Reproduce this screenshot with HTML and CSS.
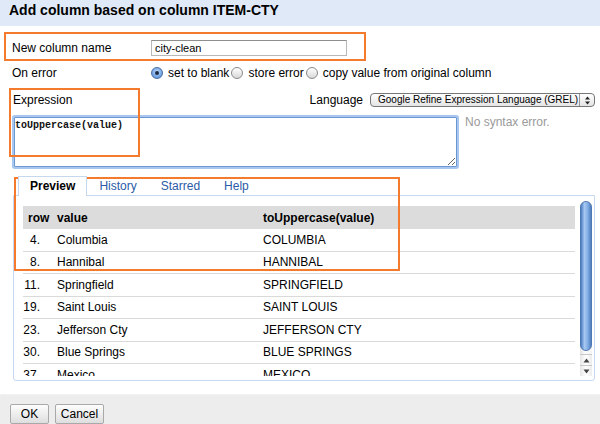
FILE: index.html
```html
<!DOCTYPE html>
<html>
<head>
<meta charset="utf-8">
<title>Add column</title>
<link rel="stylesheet" href="styles.css">
</head>
<body>
<div class="dialog">
  <div class="titlebar">Add column based on column ITEM-CTY</div>
  <div class="content">
    <div class="row row-name">
      <span class="lbl">New column name</span>
      <input class="name-input" type="text" value="city-clean">
    </div>
    <div class="row row-error">
      <span class="lbl">On error</span>
      <span class="radio checked"></span><span class="opt">set to blank</span>
      <span class="radio"></span><span class="opt">store error</span>
      <span class="radio"></span><span class="opt">copy value from original column</span>
    </div>
    <div class="row row-expr">
      <span class="lbl expr-lbl">Expression</span>
      <span class="lang-lbl">Language</span>
      <span class="select"><span class="select-text">Google Refine Expression Language (GREL)</span><span class="select-arrows"><svg width="7" height="9" viewBox="0 0 7 9"><path d="M3.5 0.5 L6 3.5 L1 3.5 Z M1 5.5 L6 5.5 L3.5 8.5 Z" fill="#222"/></svg></span></span>
    </div>
    <div class="row row-ta">
      <textarea class="expr" spellcheck="false">toUppercase(value)</textarea>
      <span class="status">No syntax error.</span>
    </div>
    <div class="tabs">
      <span class="tab active">Preview</span>
      <span class="tab">History</span>
      <span class="tab">Starred</span>
      <span class="tab">Help</span>
    </div>
    <div class="panel">
      <div class="grid-wrap">
        <div class="prow head"><span class="c1">row</span><span>value</span><span>toUppercase(value)</span></div>
        <div class="prow"><span class="c1 num">4.</span><span>Columbia</span><span>COLUMBIA</span></div>
        <div class="prow"><span class="c1 num">8.</span><span>Hannibal</span><span>HANNIBAL</span></div>
        <div class="prow"><span class="c1 num">11.</span><span>Springfield</span><span>SPRINGFIELD</span></div>
        <div class="prow"><span class="c1 num">19.</span><span>Saint Louis</span><span>SAINT LOUIS</span></div>
        <div class="prow"><span class="c1 num">23.</span><span>Jefferson Cty</span><span>JEFFERSON CTY</span></div>
        <div class="prow"><span class="c1 num">30.</span><span>Blue Springs</span><span>BLUE SPRINGS</span></div>
        <div class="prow"><span class="c1 num">37.</span><span>Mexico</span><span>MEXICO</span></div>
        <div class="prow"><span class="c1 num">41.</span><span>Kirksville</span><span>KIRKSVILLE</span></div>
      </div>
      <div class="scrollbar">
        <div class="thumb"></div>
        <div class="track-rest"></div>
        <div class="arrow"><svg width="7" height="5" viewBox="0 0 7 5"><path d="M3.5 0.5 L6.5 4.5 L0.5 4.5 Z" fill="#444"/></svg></div>
        <div class="arrow"><svg width="7" height="5" viewBox="0 0 7 5"><path d="M0.5 0.5 L6.5 0.5 L3.5 4.5 Z" fill="#444"/></svg></div>
      </div>
    </div>
  </div>
  <div class="footer">
    <button class="btn btn-ok">OK</button>
    <button class="btn btn-cancel">Cancel</button>
  </div>
  <div class="hl hl1"></div>
  <div class="hl hl2"></div>
  <div class="hl hl3"></div>
</div>
</body>
</html>
```
FILE: styles.css
```css
html, body {
  margin: 0;
  padding: 0;
  background: #fff;
}
body {
  font-family: "Liberation Sans", Arial, sans-serif;
  font-size: 12px;
  color: #000;
  width: 600px;
  height: 424px;
  overflow: hidden;
}
.dialog {
  position: relative;
  width: 600px;
  height: 424px;
  display: flex;
  flex-direction: column;
}
.titlebar {
  height: 27px;
  box-sizing: border-box;
  background: #dfe9f8;
  padding: 2px 9px 0;
  font-size: 14px;
  font-weight: bold;
  line-height: 17px;
}
.content {
  padding: 0 5px 0 12px;
  display: flex;
  flex-direction: column;
}
.row {
  display: flex;
  align-items: center;
}
.lbl {
  width: 139px;
  flex: none;
}
.row-name {
  margin-top: 14px;
  height: 16px;
}
.name-input {
  width: 196px;
  height: 16px;
  box-sizing: border-box;
  margin: 0;
  border: 1px solid #b8b8b8;
  border-top-color: #8e8e8e;
  padding: 0 0 0 3px;
  font-family: "Liberation Sans", Arial, sans-serif;
  font-size: 11px;
  color: #000;
  background: #fff;
  outline: none;
}
.row-error {
  margin-top: 9px;
  height: 16px;
}
.radio {
  width: 12px;
  height: 12px;
  box-sizing: border-box;
  border-radius: 50%;
  border: 1px solid #8a8a8a;
  background: linear-gradient(#ffffff, #d8d8d8);
  flex: none;
  margin-left: 2px;
  position: relative;
}
.row-error .lbl + .radio {
  margin-left: 0;
}
.radio.checked {
  border-color: #4a6fa5;
  background: radial-gradient(circle at 50% 40%, #c7defa 0, #7aaae6 55%, #4f84cf 100%);
}
.radio.checked::after {
  content: "";
  position: absolute;
  left: 3px;
  top: 3px;
  width: 4px;
  height: 4px;
  border-radius: 50%;
  background: #1d2b44;
}
.opt {
  margin-left: 5px;
}
.row-expr {
  margin-top: 12px;
  height: 14px;
}
.expr-lbl {
  padding-left: 1px;
}
.lang-lbl {
  margin-left: auto;
}
.select {
  margin-left: 7px;
  width: 225px;
  height: 14px;
  box-sizing: border-box;
  border: 1px solid #777;
  border-radius: 4px;
  background: linear-gradient(#ffffff, #e4e4e4);
  display: flex;
  align-items: center;
  font-size: 10px;
  line-height: 12px;
}
.select-text {
  flex: 1;
  padding-left: 7px;
  white-space: nowrap;
  overflow: hidden;
}
.select-arrows {
  width: 14px;
  height: 12px;
  border-left: 1px solid #999;
  display: flex;
  align-items: center;
  justify-content: center;
}
.row-ta {
  margin-top: 10px;
  height: 50px;
  align-items: flex-start;
}
.expr {
  margin: 0 0 0 2px;
  width: 443px;
  height: 50px;
  box-sizing: border-box;
  border: 1px solid #6b98d3;
  box-shadow: 0 0 0 2px #a9c7ee;
  border-radius: 1px;
  padding: 2px 0 0 0;
  font-family: "Liberation Mono", "Courier New", monospace;
  font-size: 10px;
  font-weight: bold;
  line-height: 12px;
  color: #111;
  resize: both;
  outline: none;
}
.status {
  margin-left: 8px;
  margin-top: -2px;
  color: #9a9a9a;
  line-height: 14px;
}
.tabs {
  margin-top: 9px;
  height: 19px;
  padding-left: 6px;
  display: flex;
  position: relative;
  z-index: 1;
}
.tab {
  padding: 0 11px;
  border: 1px solid transparent;
  border-bottom: none;
  line-height: 19px;
  height: 20px;
  box-sizing: border-box;
  color: #2b5ba8;
}
.tab.active {
  color: #000;
  font-weight: bold;
  background: #fff;
  border-color: #c5d8f0;
}
.panel {
  margin-left: 1px;
  height: 186px;
  box-sizing: border-box;
  border: 1px solid #c5d8f0;
  border-radius: 0 0 3px 3px;
  padding: 5px 2px 4px 9px;
  display: flex;
  align-items: flex-start;
}
.grid-wrap {
  margin-top: 5px;
  width: 552px;
  height: 170px;
  overflow: hidden;
  flex: none;
}
.prow {
  display: grid;
  grid-template-columns: 34px 206px 1fr;
  height: 22.5px;
  box-sizing: border-box;
  border-bottom: 1px solid #dadada;
  align-items: center;
  white-space: nowrap;
}
.prow.head {
  height: 23px;
  background: #dcdcdc;
  font-weight: bold;
  border-bottom: none;
}
.c1 {
  padding-left: 5px;
}
.c1.num {
  padding: 0 17px 0 0;
  text-align: right;
}
.scrollbar {
  margin-left: 5px;
  width: 12px;
  height: 175px;
  flex: none;
  display: flex;
  flex-direction: column;
  background: linear-gradient(90deg, #e2e2e2, #fbfbfb 40%, #f4f4f4);
  border-radius: 6px 6px 0 0;
}
.thumb {
  height: 150px;
  box-sizing: border-box;
  border: 1px solid #4f78b3;
  border-radius: 6px;
  background: linear-gradient(90deg, #4b7fc7 0, #a7c8f0 35%, #86b0e6 65%, #4e7fc4 100%);
}
.track-rest {
  height: 3px;
}
.arrow {
  height: 11px;
  box-sizing: border-box;
  border-top: 1px solid #c9c9c9;
  background: linear-gradient(90deg, #e6e6e6, #ffffff 50%, #ececec);
  display: flex;
  align-items: center;
  justify-content: center;
}
.footer {
  margin-top: 13px;
  flex: 1;
  background: #ededed;
  border-top: 1px dotted #f6f6f6;
  padding: 9px 0 0 10px;
  display: flex;
  align-items: flex-start;
  gap: 6px;
}
.btn {
  height: 20px;
  margin: 0;
  padding: 0;
  border: 1px solid #a9a9a9;
  border-radius: 2px;
  background: linear-gradient(#fdfdfd, #dedede);
  font-family: "Liberation Sans", Arial, sans-serif;
  font-size: 12px;
  color: #000;
}
.btn-ok {
  width: 39px;
}
.btn-cancel {
  width: 49px;
}
.hl {
  position: absolute;
  border: 2px solid #f47a2e;
  box-sizing: border-box;
  pointer-events: none;
}
.hl1 {
  left: 4px;
  top: 32px;
  width: 362px;
  height: 29px;
}
.hl2 {
  left: 9px;
  top: 88px;
  width: 131px;
  height: 69px;
}
.hl3 {
  left: 14px;
  top: 177px;
  width: 386px;
  height: 94px;
}
```
